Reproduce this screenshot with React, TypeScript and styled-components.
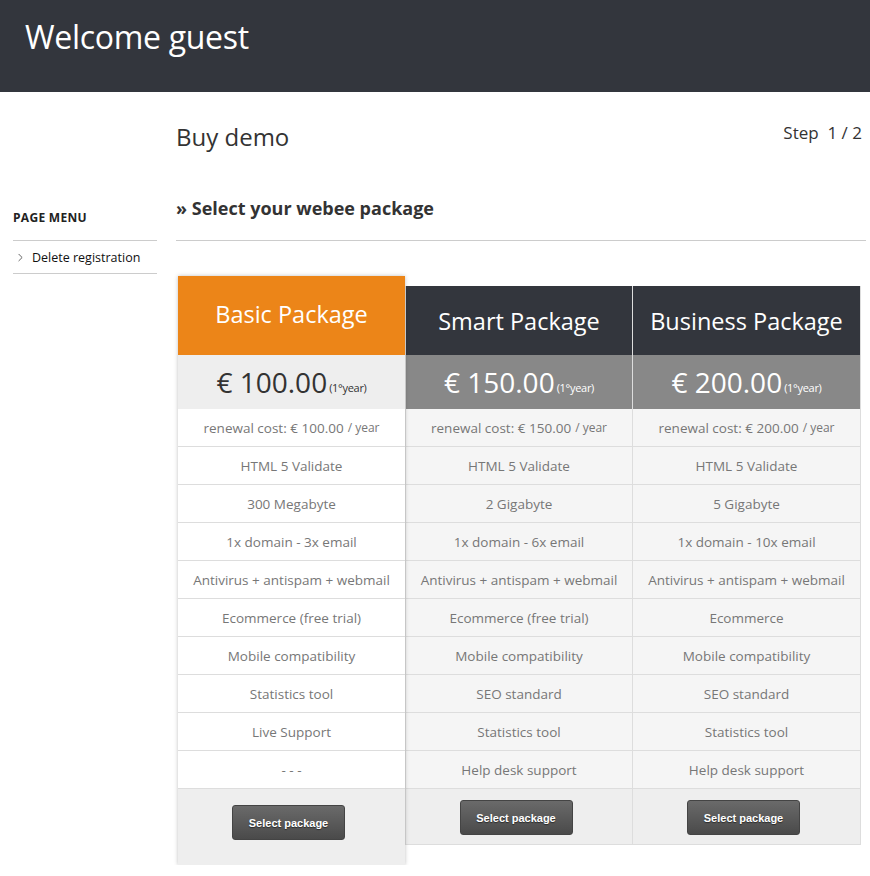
import React from 'react';
import styled, { createGlobalStyle } from 'styled-components';
import { ChevronRight } from 'lucide-react';

interface Pack {
  name: string;
  price: string;
  renewal: string;
  features: string[];
  featured?: boolean;
}

const packages: Pack[] = [
  {
    name: 'Basic Package',
    price: '€ 100.00',
    renewal: '€ 100.00',
    featured: true,
    features: [
      'HTML 5 Validate',
      '300 Megabyte',
      '1x domain - 3x email',
      'Antivirus + antispam + webmail',
      'Ecommerce (free trial)',
      'Mobile compatibility',
      'Statistics tool',
      'Live Support',
      '- - -',
    ],
  },
  {
    name: 'Smart Package',
    price: '€ 150.00',
    renewal: '€ 150.00',
    features: [
      'HTML 5 Validate',
      '2 Gigabyte',
      '1x domain - 6x email',
      'Antivirus + antispam + webmail',
      'Ecommerce (free trial)',
      'Mobile compatibility',
      'SEO standard',
      'Statistics tool',
      'Help desk support',
    ],
  },
  {
    name: 'Business Package',
    price: '€ 200.00',
    renewal: '€ 200.00',
    features: [
      'HTML 5 Validate',
      '5 Gigabyte',
      '1x domain - 10x email',
      'Antivirus + antispam + webmail',
      'Ecommerce',
      'Mobile compatibility',
      'SEO standard',
      'Statistics tool',
      'Help desk support',
    ],
  },
];

const App: React.FC = () => {
  return (
    <>
      <GlobalStyle />
      <Header>
        <h1>Welcome guest</h1>
      </Header>
      <Layout>
        <Sidebar>
          <MenuTitle>PAGE MENU</MenuTitle>
          <MenuList>
            <MenuItem>
              <ChevronRight size={13} strokeWidth={1.5} />
              <span>Delete registration</span>
            </MenuItem>
          </MenuList>
        </Sidebar>
        <Main>
          <TopRow>
            <PageTitle>Buy demo</PageTitle>
            <Step>Step&nbsp; 1 / 2</Step>
          </TopRow>
          <SubTitle>» Select your webee package</SubTitle>
          <Pricing>
            {packages.map((p, i) => (
              <Column key={p.name} $featured={p.featured} $last={i === packages.length - 1}>
                <ColHeader $featured={p.featured}>{p.name}</ColHeader>
                <PriceRow $featured={p.featured}>
                  <span className="amount">{p.price}</span>
                  <span className="period">(1°year)</span>
                </PriceRow>
                <Cell $featured={p.featured}>
                  renewal cost: {p.renewal} <small>/ year</small>
                </Cell>
                {p.features.map((f, j) => (
                  <Cell key={j} $featured={p.featured}>{f}</Cell>
                ))}
                <Footer $featured={p.featured}>
                  <SelectButton>Select package</SelectButton>
                </Footer>
              </Column>
            ))}
          </Pricing>
        </Main>
      </Layout>
    </>
  );
};

const GlobalStyle = createGlobalStyle`
  body {
    margin: 0;
    background: #fff;
    font-family: "Open Sans", "Noto Sans", sans-serif;
    color: #333;
  }
`;

const Header = styled.header`
  height: 92px;
  background: #33363d;
  padding-left: 25px;
  box-sizing: border-box;

  h1 {
    margin: 0;
    padding-top: 15px;
    font-size: 32px;
    font-weight: 400;
    color: #fff;
    letter-spacing: -0.3px;
  }
`;

const Layout = styled.div`
  display: flex;
  padding: 0 4px 0 13px;
  gap: 19px;
`;

const Sidebar = styled.aside`
  width: 144px;
  flex-shrink: 0;
  padding-top: 117px;
`;

const MenuTitle = styled.div`
  font-size: 12px;
  font-weight: 700;
  color: #222;
  letter-spacing: 0.3px;
  padding-bottom: 14px;
  border-bottom: 1px solid #ccc;
`;

const MenuList = styled.div`
  border-bottom: 1px solid #ccc;
`;

const MenuItem = styled.div`
  display: flex;
  align-items: center;
  gap: 5px;
  height: 32px;
  padding-left: 1px;
  font-size: 12.5px;
  color: #111;

  svg {
    color: #444;
  }
`;

const Main = styled.main`
  flex: 1;
`;

const TopRow = styled.div`
  display: flex;
  justify-content: space-between;
  align-items: flex-start;
  padding-top: 29px;
`;

const PageTitle = styled.h2`
  margin: 0;
  font-size: 24px;
  font-weight: 400;
  color: #333;
  line-height: 32px;
`;

const Step = styled.div`
  font-size: 17px;
  color: #333;
  line-height: 24px;
  padding-right: 4px;
`;

const SubTitle = styled.h3`
  margin: 43px 0 0;
  font-size: 18px;
  font-weight: 700;
  color: #333;
  line-height: 24px;
  padding-bottom: 20px;
  border-bottom: 1px solid #ccc;
`;

const Pricing = styled.div`
  display: flex;
  align-items: flex-start;
  margin: 35px 0 0 2px;
`;

const Column = styled.div<{ $featured?: boolean; $last?: boolean }>`
  width: ${(p) => (p.$last ? '229px' : '227px')};
  display: flex;
  flex-direction: column;
  margin-top: ${(p) => (p.$featured ? '0' : '10px')};
  box-shadow: ${(p) => (p.$featured ? '0 0 4px rgba(0, 0, 0, 0.25)' : 'none')};
  border-left: ${(p) => (p.$featured ? 'none' : '1px solid #ddd')};
  border-right: ${(p) => (p.$last ? '1px solid #ddd' : 'none')};
  position: relative;
  z-index: ${(p) => (p.$featured ? 1 : 0)};
  box-sizing: border-box;
`;

const ColHeader = styled.div<{ $featured?: boolean }>`
  height: ${(p) => (p.$featured ? '79px' : '69px')};
  display: flex;
  align-items: center;
  justify-content: center;
  background: ${(p) => (p.$featured ? '#ec8518' : '#33363d')};
  color: #fff;
  font-size: 23.5px;
  padding-bottom: ${(p) => (p.$featured ? '4px' : '0')};
  box-sizing: border-box;
`;

const PriceRow = styled.div<{ $featured?: boolean }>`
  height: 54px;
  display: flex;
  align-items: center;
  justify-content: center;
  gap: 2px;
  background: ${(p) => (p.$featured ? '#eeeeee' : '#888888')};
  color: ${(p) => (p.$featured ? '#333' : '#fff')};

  .amount {
    font-size: 28px;
  }

  .period {
    font-size: 11px;
    margin-top: 10px;
    letter-spacing: -0.3px;
  }
`;

const Cell = styled.div<{ $featured?: boolean }>`
  height: 38px;
  display: flex;
  align-items: center;
  justify-content: center;
  background: ${(p) => (p.$featured ? '#fff' : '#f5f5f5')};
  border-bottom: 1px solid #ddd;
  box-sizing: border-box;
  font-size: 13.5px;
  color: #777;
  white-space: nowrap;

  small {
    font-size: 12px;
    margin-left: 4px;
  }
`;

const Footer = styled.div<{ $featured?: boolean }>`
  height: ${(p) => (p.$featured ? '76px' : '56px')};
  display: flex;
  justify-content: center;
  align-items: flex-start;
  padding-top: ${(p) => (p.$featured ? '16px' : '11px')};
  background: #eeeeee;
  box-sizing: border-box;
  border-bottom: ${(p) => (p.$featured ? 'none' : '1px solid #ddd')};
`;

const SelectButton = styled.button`
  width: 113px;
  height: 35px;
  margin-right: 6px;
  border: 1px solid #444;
  border-radius: 3px;
  background: linear-gradient(#6a6a6a, #4a4a4a);
  color: #fff;
  font-family: "Liberation Sans", Arial, sans-serif;
  font-weight: 700;
  font-size: 11px;
  text-shadow: 0 1px 1px rgba(0, 0, 0, 0.5);
  cursor: pointer;
`;

export default App;
